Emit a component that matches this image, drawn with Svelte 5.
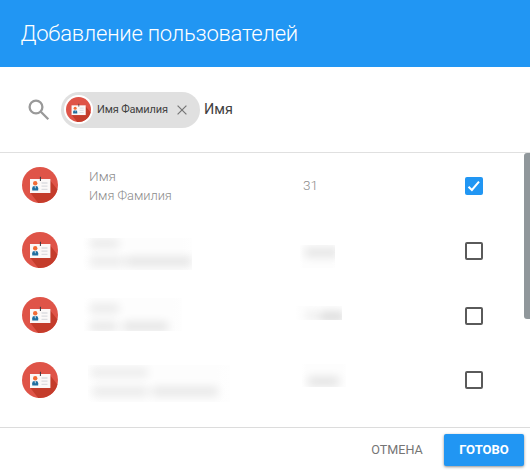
<script>
  let query = $state('Имя');

  // Hidden rows carry smudge geometry, relative to each soft patch: [x, y, width, strength]
  let rows = $state([
    { name: 'Имя', full: 'Имя Фамилия', value: '31', checked: true },
    {
      checked: false,
      patches: [
        { x: 83, y: 20, w: 109, h: 32, marks: [[7, 5, 29, 0.8], [7, 23, 34, 0.75], [43, 23, 66, 1]] },
        { x: 300, y: 27, w: 35, h: 23, marks: [[5, 7, 34, 1]] }
      ]
    },
    {
      checked: false,
      patches: [
        { x: 84, y: 15, w: 98, h: 33, marks: [[6, 10, 29, 0.8], [6, 28, 27, 0.9], [39, 28, 45, 1]] },
        { x: 295, y: 23, w: 47, h: 14, marks: [[12, 9, 8, 0.8], [24, 10, 26, 1.4]] }
      ]
    },
    {
      checked: false,
      patches: [
        { x: 88, y: 17, w: 142, h: 37, marks: [[2, 7, 58, 0.7], [4, 26, 56, 0.8], [64, 26, 66, 0.9]] },
        { x: 302, y: 16, w: 44, h: 23, marks: [[6, 17, 31, 1.1]] }
      ]
    }
  ]);
</script>

{#snippet avatar()}
  <svg class="avatar" viewBox="0 0 36 36" aria-hidden="true">
    <circle cx="18" cy="18" r="18" fill="#df5448" />
    <path d="M8 25.5L16.2 35.9A18 18 0 0 0 35.4 22.4L27.8 13z" fill="#c43c2b" />
    <rect x="8" y="12" width="20.4" height="14" fill="#fbf8f8" />
    <path d="M18.4 9.8v4.2" stroke="#373942" stroke-width="1" />
    <path d="M19.5 16h6M19.5 19.2h6M19.5 22.4h6" stroke="#dcdce0" stroke-width="1.3" />
    <path d="M10.2 23.6v-2.4q0-2.2 2.2-2.2h1.6q2.2 0 2.2 2.2v2.4z" fill="#216e9f" />
    <path d="M12.5 19.2h1.4l-.7 2.5z" fill="#fff" />
    <circle cx="13.2" cy="16.3" r="2.2" fill="#f26b35" />
  </svg>
{/snippet}

<div class="dialog">
  <header>Добавление пользователей</header>

  <div class="search">
    <svg class="lens" viewBox="0 0 22 22" aria-hidden="true">
      <circle cx="8" cy="8" r="6.4" />
      <path d="M12.8 12.8L20.3 20.3" />
    </svg>
    <div class="chip">
      <span class="ring">{@render avatar()}</span>
      <span class="label">Имя Фамилия</span>
      <svg class="close" viewBox="0 0 10 10" aria-hidden="true"><path d="M.6.6l8.8 8.8M9.4.6L.6 9.4" /></svg>
    </div>
    <input bind:value={query} aria-label="Имя" />
  </div>

  <div class="body">
    <div class="list">
      {#each rows as row}
        <div class="row">
          {@render avatar()}
          <div class="names">
            {#if row.name}
              <span class="first">{row.name}</span>
              <span>{row.full}</span>
            {/if}
          </div>
          <div class="value">{row.value ?? ''}</div>
          <button
            class="check"
            class:on={row.checked}
            role="checkbox"
            aria-checked={row.checked}
            aria-label="Имя"
            onclick={() => (row.checked = !row.checked)}
          >
            {#if row.checked}
              <svg viewBox="0 0 18 18" aria-hidden="true"><path d="M3.5 9.7l3.4 3.3L14 4.6" /></svg>
            {/if}
          </button>
          {#each row.patches ?? [] as p}
            <div class="patch" style="left:{p.x}px;top:{p.y}px;width:{p.w}px;height:{p.h}px">
              {#each p.marks as m}
                <i style="left:{m[0]}px;top:{m[1] - 4}px;width:{m[2]}px;opacity:{m[3] * 0.1}"></i>
              {/each}
            </div>
          {/each}
        </div>
      {/each}
    </div>
    <div class="track"><div class="thumb"></div></div>
  </div>

  <footer>
    <button class="cancel">ОТМЕНА</button>
    <button class="done">ГОТОВО</button>
  </footer>
</div>

<style>
  :global(body) {
    background: #fff;
  }
  .dialog {
    width: 530px;
    height: 473px;
    display: flex;
    flex-direction: column;
    overflow: hidden;
    background: #fff;
    font-family: Roboto, "Liberation Sans", sans-serif;
  }
  header {
    height: 67px;
    flex: none;
    box-sizing: border-box;
    padding-left: 20.5px;
    background: #2196f3;
    color: #fff;
    font-size: 22px;
    font-weight: 300;
    letter-spacing: -0.23px;
    line-height: 67px;
    white-space: nowrap;
  }
  .search {
    height: 86px;
    flex: none;
    box-sizing: border-box;
    padding: 0 20px 0 28px;
    border-bottom: 1px solid #e0e0e0;
    display: flex;
    align-items: center;
  }
  .lens {
    width: 22px;
    height: 22px;
    margin-right: 11px;
    fill: none;
    stroke: #999;
    stroke-width: 2.3;
  }
  .chip {
    width: 139px;
    height: 36px;
    box-sizing: border-box;
    padding-left: 3px;
    border-radius: 18px;
    background: #e0e0e0;
    display: flex;
    align-items: center;
    flex: none;
  }
  .ring {
    width: 25px;
    height: 25px;
    padding: 2px;
    border-radius: 50%;
    background: #fff;
    display: flex;
  }
  .avatar {
    width: 36px;
    height: 36px;
    margin-bottom: 1px;
    display: block;
    flex: none;
  }
  .ring .avatar {
    width: 25px;
    height: 25px;
    margin: 0;
  }
  .label {
    width: 80px;
    margin-left: 4px;
    font-size: 11px;
    letter-spacing: -0.15px;
    color: #424242;
    white-space: nowrap;
  }
  .close {
    width: 10px;
    height: 10px;
    fill: none;
    stroke: #757575;
    stroke-width: 1.2;
  }
  input {
    width: 200px;
    margin: 0 0 0 4px;
    padding: 0;
    border: 0;
    outline: 0;
    font: 400 14.4px Roboto, "Liberation Sans", sans-serif;
    color: #424242;
  }
  .body {
    height: 274px;
    flex: none;
    display: flex;
    overflow: hidden;
  }
  .list {
    flex: 1;
  }
  .row {
    position: relative;
    height: 65px;
    padding-left: 22px;
    display: flex;
    align-items: center;
  }
  .row:last-child {
    height: 64px;
  }
  .names {
    width: 214px;
    margin-left: 31px;
    display: flex;
    flex-direction: column;
    font-size: 12.8px;
    font-weight: 300;
    line-height: 19px;
    color: #8c8c8c;
  }
  .first {
    font-size: 13.6px;
  }
  .value {
    width: 162px;
    margin-bottom: 2px;
    font-size: 13.5px;
    font-weight: 300;
    color: #8c8c8c;
  }
  .check {
    width: 18px;
    height: 18px;
    box-sizing: border-box;
    padding: 0;
    border: 2px solid #5a5a5a;
    border-radius: 2px;
    background: #fff;
    display: flex;
    flex: none;
  }
  .check.on {
    border: 0;
    background: #2196f3;
  }
  .check svg {
    width: 18px;
    height: 18px;
    fill: none;
    stroke: #fff;
    stroke-width: 2;
  }
  .patch {
    position: absolute;
    overflow: hidden;
    background: linear-gradient(90deg, #fff, #fdfdfd 10%, #fdfdfd 90%, #fefefe);
  }
  .patch i {
    position: absolute;
    height: 9px;
    background: #000;
    filter: blur(5px);
  }
  .track {
    width: 6px;
    flex: none;
  }
  .thumb {
    height: 166px;
    border-radius: 3px 0 0 3px;
    background: #90979b;
  }
  footer {
    height: 46px;
    flex: none;
    box-sizing: border-box;
    padding: 6px 6px 0 0;
    border-top: 1px solid #dcdcdc;
    display: flex;
    justify-content: flex-end;
    align-items: flex-start;
  }
  footer button {
    height: 32px;
    padding: 0;
    border: 0;
    font-family: Roboto, "Liberation Sans", sans-serif;
    font-size: 13px;
  }
  .cancel {
    width: 54px;
    margin-right: 20px;
    padding-bottom: 1px;
    background: none;
    color: #757575;
    font-size: 12.6px;
  }
  .done {
    width: 80px;
    padding-bottom: 1px;
    border-radius: 2px;
    background: #2196f3;
    color: #fff;
    font-weight: 700;
    box-shadow: 0 1px 3px rgba(0, 0, 0, 0.45);
  }
</style>
